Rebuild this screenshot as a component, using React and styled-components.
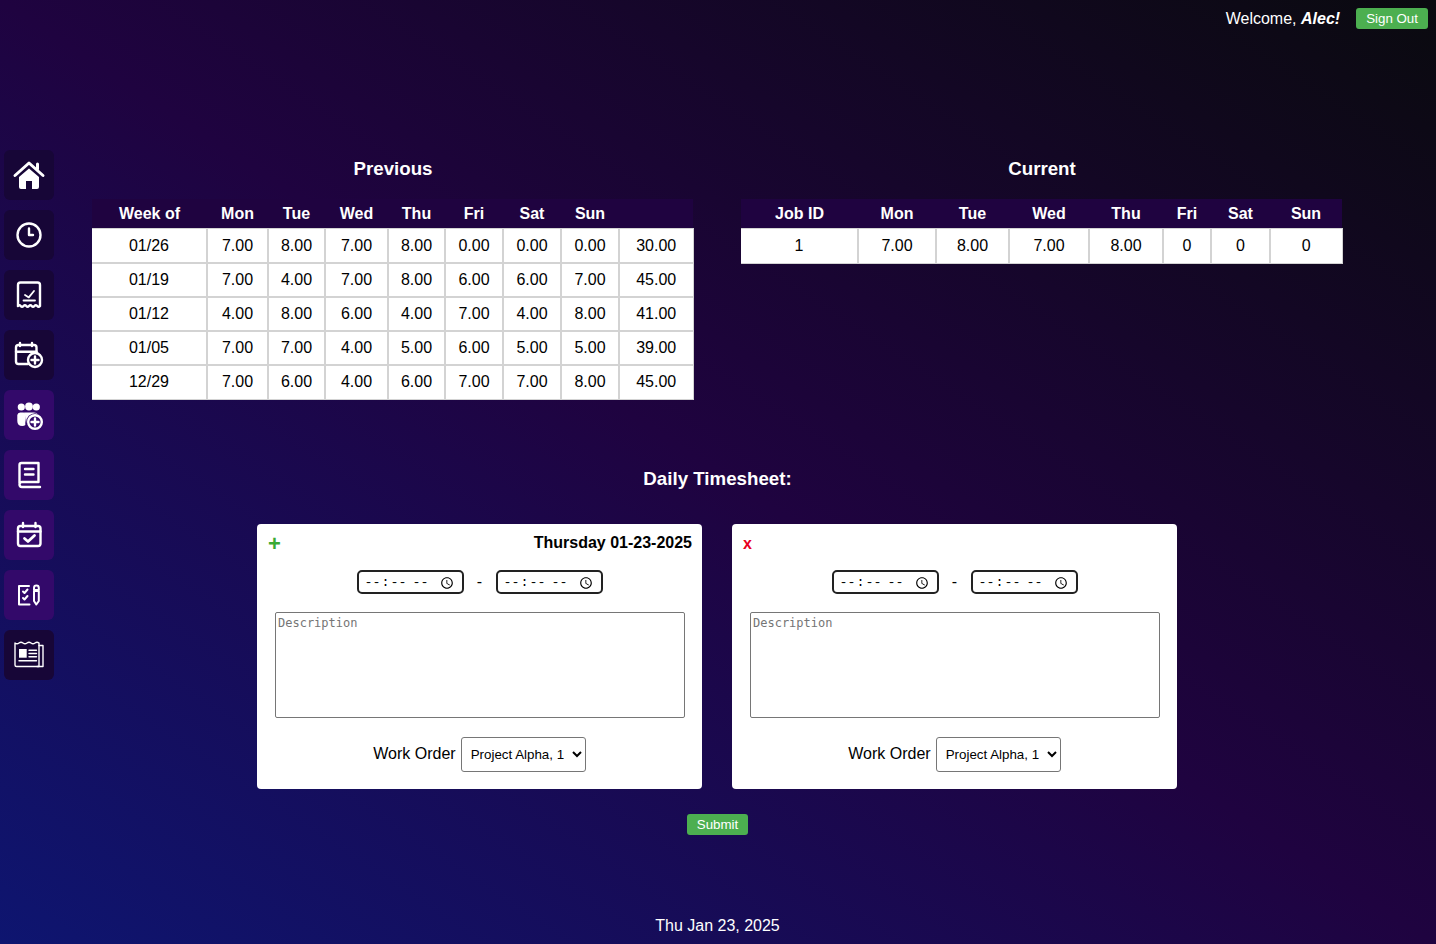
import React from "react";
import styled, { createGlobalStyle } from "styled-components";

const GlobalStyle = createGlobalStyle`
  html, body {
    margin: 0;
    padding: 0;
  }
  body {
    font-family: "Liberation Sans", Arial, sans-serif;
    font-size: 16px;
    color: #fff;
  }
`;

const Page = styled.div`
  height: 944px;
  overflow: hidden;
  background: linear-gradient(to top right, #0e1570 0%, #1f0340 50%, #0a0a0f 100%);
`;

const TopBar = styled.header`
  height: 150px;
  box-sizing: border-box;
  display: flex;
  justify-content: flex-end;
  align-items: flex-start;
  gap: 16px;
  padding: 8px 8px 0 0;
`;

const Welcome = styled.span`
  line-height: 21px;
`;

const GreenButton = styled.button`
  height: 21px;
  padding: 0 10px;
  border: none;
  border-radius: 3px;
  background: #4caf50;
  color: #fff;
  font-family: "Liberation Sans", Arial, sans-serif;
  font-size: 13.33px;
`;

const Body = styled.div`
  display: grid;
  grid-template-columns: 92px 1251px;
`;

const Sidebar = styled.nav`
  display: flex;
  flex-direction: column;
  gap: 10px;
  padding-left: 4px;
`;

const Tile = styled.a`
  width: 50px;
  height: 50px;
  border-radius: 6px;
  display: flex;
  align-items: center;
  justify-content: center;
  background: ${(props) => (props.$active ? "#33096a" : "#170637")};
  color: #fff;
`;

const Main = styled.main`
  display: flex;
  flex-direction: column;
`;

const TablesRow = styled.div`
  display: flex;
  justify-content: space-between;
`;

const TableBlock = styled.section`
  width: 602px;
`;

const Heading = styled.h3`
  margin: 0;
  font-size: 18.72px;
  line-height: 38px;
  text-align: center;
  color: #fff;
`;

const Table = styled.table`
  width: 601px;
  margin-top: 11px;
  table-layout: fixed;
  border-collapse: collapse;
`;

const Th = styled.th`
  height: 29px;
  padding: 0;
  background: #1f0340;
  color: #fff;
  font-size: 16px;
  font-weight: bold;
  text-align: center;
`;

const Row = styled.tr`
  height: ${(props) => (props.$last ? 35 : 34)}px;
`;

const Td = styled.td`
  padding: ${(props) => (props.$first && !props.$last ? 2 : 0)}px 0 0;
  background: #fff;
  border: 2px solid #d3d3d3;
  border-top-width: ${(props) => (props.$first ? 1 : 2)}px;
  border-bottom-width: ${(props) => (props.$last ? 1 : 2)}px;
  color: #000;
  text-align: center;
  &:first-child {
    border-left: none;
  }
  &:last-child {
    border-right-width: 1px;
  }
`;

const DailyHeading = styled(Heading)`
  margin-top: 60px;
`;

const Cards = styled.div`
  display: flex;
  justify-content: center;
  gap: 30px;
  margin-top: 26px;
  padding-right: 1px;
`;

const Card = styled.div`
  width: 445px;
  height: 265px;
  box-sizing: border-box;
  padding: 10px 10px 0;
  background: #fff;
  border-radius: 4px;
  color: #000;
`;

const CardTop = styled.div`
  display: flex;
  justify-content: space-between;
  align-items: center;
  height: 18px;
`;

const CardIcon = styled.span`
  padding-top: 2px;
  margin-left: 1px;
  color: ${(props) => props.$color};
  font-weight: bold;
  font-size: ${(props) => props.$size};
  line-height: 18px;
`;

const DateLabel = styled.span`
  font-weight: bold;
`;

const TimeRow = styled.div`
  display: flex;
  justify-content: center;
  align-items: center;
  gap: 13px;
  margin-top: 18px;
`;

const Dash = styled.span`
  width: 6px;
  text-align: center;
`;

const TimeInput = styled.input`
  width: 107px;
  height: 24px;
  box-sizing: border-box;
  padding: 1px 5px 0;
  border: 2px solid #222;
  border-radius: 5px;
  background: #fff;
  font-family: "Liberation Mono", monospace;
  font-size: 13.33px;
`;

const Description = styled.textarea`
  display: block;
  width: 410px;
  height: 106px;
  box-sizing: border-box;
  margin: 18px 0 0 8px;
  padding: 3px 2px 2px;
  border: 1px solid #767676;
  border-radius: 2px;
  resize: none;
  font-family: "DejaVu Sans Mono", monospace;
  font-size: 12px;
  &::placeholder {
    color: #757575;
  }
`;

const OrderRow = styled.div`
  display: flex;
  justify-content: center;
  align-items: center;
  gap: 5px;
  margin-top: 19px;
`;

const OrderLabel = styled.span`
  padding-bottom: 2px;
`;

const OrderSelect = styled.select`
  width: 125px;
  height: 35px;
  padding: 0 5px;
  border: 1px solid #767676;
  border-radius: 3px;
  background: #fff;
  color: #000;
  font-family: "Liberation Sans", Arial, sans-serif;
  font-size: 13.33px;
`;

const SubmitRow = styled.div`
  display: flex;
  justify-content: center;
  margin-top: 25px;
`;

const Footer = styled.footer`
  margin-top: 81px;
  text-align: center;
  line-height: 20px;
`;

const Line = styled.g`
  fill: none;
  stroke: currentColor;
  stroke-width: ${(props) => props.$w || 2.4};
  stroke-linecap: round;
  stroke-linejoin: round;
`;

const Glyph = ({ children }) => (
  <svg width="50" height="50" viewBox="0 0 50 50" aria-hidden="true">
    {children}
  </svg>
);

const icons = [
  {
    key: "home",
    node: (
      <Glyph>
        <Line $w={3}>
          <path d="M11 25.500L25 13L39 25.500" />
          <path d="M33.500 14V19" />
        </Line>
        <path
          d="M15 27L25 18.500L35 27V37a2 2 0 0 1-2 2H28V31H22V39H17a2 2 0 0 1-2-2z"
          fill="currentColor"
        />
      </Glyph>
    ),
  },
  {
    key: "clock",
    node: (
      <Glyph>
        <Line>
          <circle cx="25" cy="25" r="11.500" />
          <path d="M25 18.500V25H29" />
        </Line>
      </Glyph>
    ),
  },
  {
    key: "receipt",
    node: (
      <Glyph>
        <Line>
          <path d="M14 36V15a2.500 2.500 0 0 1 2.500-2.500h17A2.500 2.500 0 0 1 36 15V36q-1.400 1.600-2.800 0t-2.800 0t-2.700 0t-2.700 0t-2.700 0t-2.800 0t-2.800 0t-2.800 0z" />
        </Line>
        <Line $w={1.800}>
          <path d="M21 25l3.800 2.400L30 21M19.500 30.500H31" />
        </Line>
      </Glyph>
    ),
  },
  {
    key: "calendar-plus",
    node: (
      <Glyph>
        <Line>
          <path d="M24 34H14.500A2.500 2.500 0 0 1 12 31.500V17.500A2.500 2.500 0 0 1 14.500 15H30a2.500 2.500 0 0 1 2.500 2.500V23" />
          <path d="M12 21.700H32.500M16 13V16M28 13V16" />
          <circle cx="31" cy="30" r="7" />
          <path d="M31 26.500V33.500M27.500 30H34.500" />
        </Line>
      </Glyph>
    ),
  },
  {
    key: "team-plus",
    active: true,
    node: (
      <Glyph>
        <circle cx="17.300" cy="17" r="3.600" fill="currentColor" />
        <circle cx="25" cy="16.500" r="3.900" fill="currentColor" />
        <circle cx="32.300" cy="17" r="3.600" fill="currentColor" />
        <path d="M13.300 25a3 3 0 0 1 3-2.500h3a3 3 0 0 1 2 1V35q-1 1-3 1q-5 0-5-5z" fill="currentColor" />
        <path d="M20 22.500h10q3 0 4 2v8H22q-1-4-1-7t-1-3z" fill="currentColor" />
        <circle cx="31" cy="32" r="8.800" fill="#33096a" />
        <Line $w={2.400}>
          <circle cx="31" cy="32" r="6.800" />
          <path d="M31 28.500V35.500M27.500 32H34.500" />
        </Line>
      </Glyph>
    ),
  },
  {
    key: "book",
    active: true,
    node: (
      <Glyph>
        <Line>
          <path d="M15.500 33V15a2 2 0 0 1 2-2H34.500V32H18q-2.500 0-2.500 2.500T18 37H36" />
          <path d="M21 19H29.500M21 24.500H29.500" />
        </Line>
      </Glyph>
    ),
  },
  {
    key: "calendar-check",
    active: true,
    node: (
      <Glyph>
        <Line>
          <rect x="14" y="16" width="22.500" height="20" rx="2.500" />
          <path d="M14 21.500H36.500M19 13V17M31.500 13V17" />
        </Line>
        <Line $w={2.800}>
          <path d="M20.500 28.500l3.500 3l6.500-6" />
        </Line>
      </Glyph>
    ),
  },
  {
    key: "checklist-pencil",
    active: true,
    node: (
      <Glyph>
        <Line $w={2}>
          <path d="M25 16H15V34.500H25.500" />
          <path d="M19 21.500l1.500 1.500l3-3.500M19 28l1.500 1.500l3-3.500" />
          <path d="M30 21V31l2.300 3.500L34.800 31V21zM30 18a2.400 2.400 0 0 1 4.800 0v2H30z" />
        </Line>
      </Glyph>
    ),
  },
  {
    key: "newspaper",
    node: (
      <Glyph>
        <Line $w={1.400}>
          <path d="M11 13q2 1.500 4 0t4 0t4 0t4 0t4 0t4 0V36.500H12.500A1.500 1.500 0 0 1 11 35z" />
          <path d="M35 15.500H39V36.500H33" />
          <path d="M25 20.300H32.500M25 23.500H32.500M25 26.800H32.500M15 30.800H32.500" />
        </Line>
        <rect x="15" y="19" width="7.700" height="8.700" fill="currentColor" />
      </Glyph>
    ),
  },
];

const previousCols = [115, 61, 57, 63, 57, 58, 58, 58, 74];
const previousHead = ["Week of", "Mon", "Tue", "Wed", "Thu", "Fri", "Sat", "Sun", ""];
const previousRows = [
  ["01/26", "7.00", "8.00", "7.00", "8.00", "0.00", "0.00", "0.00", "30.00"],
  ["01/19", "7.00", "4.00", "7.00", "8.00", "6.00", "6.00", "7.00", "45.00"],
  ["01/12", "4.00", "8.00", "6.00", "4.00", "7.00", "4.00", "8.00", "41.00"],
  ["01/05", "7.00", "7.00", "4.00", "5.00", "6.00", "5.00", "5.00", "39.00"],
  ["12/29", "7.00", "6.00", "4.00", "6.00", "7.00", "7.00", "8.00", "45.00"],
];

const currentCols = [117, 78, 73, 80, 74, 48, 59, 72];
const currentHead = ["Job ID", "Mon", "Tue", "Wed", "Thu", "Fri", "Sat", "Sun"];
const currentRows = [["1", "7.00", "8.00", "7.00", "8.00", "0", "0", "0"]];

const Col = styled.col`
  width: ${(props) => props.$w}px;
`;

const DataTable = ({ cols, head, rows }) => (
  <Table>
    <colgroup>
      {cols.map((w, index) => (
        <Col key={index} $w={w} />
      ))}
    </colgroup>
    <thead>
      <tr>
        {head.map((label, index) => (
          <Th key={index}>{label}</Th>
        ))}
      </tr>
    </thead>
    <tbody>
      {rows.map((row, index) => (
        <Row key={index} $last={index === rows.length - 1}>
          {row.map((value, cell) => (
            <Td key={cell} $first={index === 0} $last={index === rows.length - 1}>
              {value}
            </Td>
          ))}
        </Row>
      ))}
    </tbody>
  </Table>
);

const EntryCard = ({ icon, color, size, date }) => (
  <Card>
    <CardTop>
      <CardIcon $color={color} $size={size}>
        {icon}
      </CardIcon>
      <DateLabel>{date}</DateLabel>
    </CardTop>
    <TimeRow>
      <TimeInput type="time" />
      <Dash>-</Dash>
      <TimeInput type="time" />
    </TimeRow>
    <Description placeholder="Description" />
    <OrderRow>
      <OrderLabel>Work Order</OrderLabel>
      <OrderSelect defaultValue="1">
        <option value="1">Project Alpha, 1</option>
      </OrderSelect>
    </OrderRow>
  </Card>
);

const App = () => (
  <Page>
    <GlobalStyle />
    <TopBar>
      <Welcome>
        Welcome,{" "}
        <b>
          <i>Alec!</i>
        </b>
      </Welcome>
      <GreenButton>Sign Out</GreenButton>
    </TopBar>
    <Body>
      <Sidebar>
        {icons.map((icon) => (
          <Tile key={icon.key} $active={icon.active}>
            {icon.node}
          </Tile>
        ))}
      </Sidebar>
      <Main>
        <TablesRow>
          <TableBlock>
            <Heading>Previous</Heading>
            <DataTable cols={previousCols} head={previousHead} rows={previousRows} />
          </TableBlock>
          <TableBlock>
            <Heading>Current</Heading>
            <DataTable cols={currentCols} head={currentHead} rows={currentRows} />
          </TableBlock>
        </TablesRow>
        <DailyHeading>Daily Timesheet:</DailyHeading>
        <Cards>
          <EntryCard icon="+" color="#3aaa35" size="22px" date="Thursday 01-23-2025" />
          <EntryCard icon="x" color="#e8001c" size="16px" />
        </Cards>
        <SubmitRow>
          <GreenButton>Submit</GreenButton>
        </SubmitRow>
        <Footer>Thu Jan 23, 2025</Footer>
      </Main>
    </Body>
  </Page>
);

export default App;
